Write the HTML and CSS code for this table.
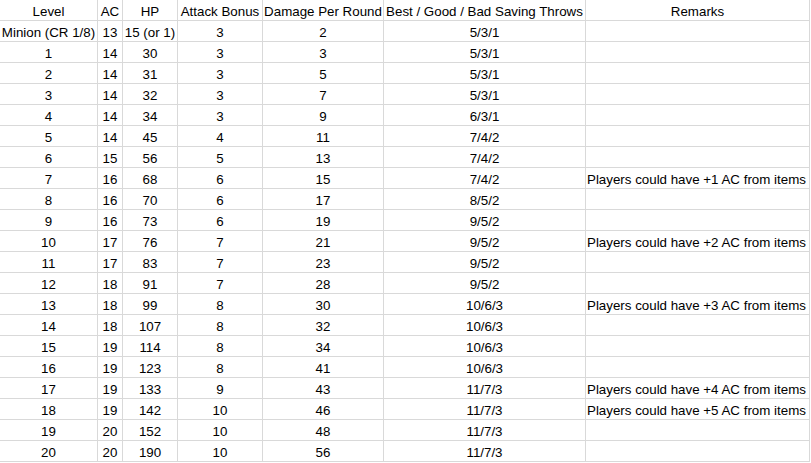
FILE: index.html
```html
<!DOCTYPE html>
<html lang="en">
<head>
<meta charset="utf-8">
<title>Monster stats by level</title>
<link rel="stylesheet" href="styles.css">
</head>
<body>
<div class="sheet">
  <div class="c">Level</div><div class="c">AC</div><div class="c">HP</div><div class="c">Attack Bonus</div><div class="c">Damage Per Round</div><div class="c">Best / Good / Bad Saving Throws</div><div class="c">Remarks</div>
  <div class="c">Minion (CR 1/8)</div><div class="c">13</div><div class="c">15 (or 1)</div><div class="c">3</div><div class="c">2</div><div class="c">5/3/1</div><div class="l"></div>
  <div class="c">1</div><div class="c">14</div><div class="c">30</div><div class="c">3</div><div class="c">3</div><div class="c">5/3/1</div><div class="l"></div>
  <div class="c">2</div><div class="c">14</div><div class="c">31</div><div class="c">3</div><div class="c">5</div><div class="c">5/3/1</div><div class="l"></div>
  <div class="c">3</div><div class="c">14</div><div class="c">32</div><div class="c">3</div><div class="c">7</div><div class="c">5/3/1</div><div class="l"></div>
  <div class="c">4</div><div class="c">14</div><div class="c">34</div><div class="c">3</div><div class="c">9</div><div class="c">6/3/1</div><div class="l"></div>
  <div class="c">5</div><div class="c">14</div><div class="c">45</div><div class="c">4</div><div class="c">11</div><div class="c">7/4/2</div><div class="l"></div>
  <div class="c">6</div><div class="c">15</div><div class="c">56</div><div class="c">5</div><div class="c">13</div><div class="c">7/4/2</div><div class="l"></div>
  <div class="c">7</div><div class="c">16</div><div class="c">68</div><div class="c">6</div><div class="c">15</div><div class="c">7/4/2</div><div class="l">Players could have +1 AC from items</div>
  <div class="c">8</div><div class="c">16</div><div class="c">70</div><div class="c">6</div><div class="c">17</div><div class="c">8/5/2</div><div class="l"></div>
  <div class="c">9</div><div class="c">16</div><div class="c">73</div><div class="c">6</div><div class="c">19</div><div class="c">9/5/2</div><div class="l"></div>
  <div class="c">10</div><div class="c">17</div><div class="c">76</div><div class="c">7</div><div class="c">21</div><div class="c">9/5/2</div><div class="l">Players could have +2 AC from items</div>
  <div class="c">11</div><div class="c">17</div><div class="c">83</div><div class="c">7</div><div class="c">23</div><div class="c">9/5/2</div><div class="l"></div>
  <div class="c">12</div><div class="c">18</div><div class="c">91</div><div class="c">7</div><div class="c">28</div><div class="c">9/5/2</div><div class="l"></div>
  <div class="c">13</div><div class="c">18</div><div class="c">99</div><div class="c">8</div><div class="c">30</div><div class="c">10/6/3</div><div class="l">Players could have +3 AC from items</div>
  <div class="c">14</div><div class="c">18</div><div class="c">107</div><div class="c">8</div><div class="c">32</div><div class="c">10/6/3</div><div class="l"></div>
  <div class="c">15</div><div class="c">19</div><div class="c">114</div><div class="c">8</div><div class="c">34</div><div class="c">10/6/3</div><div class="l"></div>
  <div class="c">16</div><div class="c">19</div><div class="c">123</div><div class="c">8</div><div class="c">41</div><div class="c">10/6/3</div><div class="l"></div>
  <div class="c">17</div><div class="c">19</div><div class="c">133</div><div class="c">9</div><div class="c">43</div><div class="c">11/7/3</div><div class="l">Players could have +4 AC from items</div>
  <div class="c">18</div><div class="c">19</div><div class="c">142</div><div class="c">10</div><div class="c">46</div><div class="c">11/7/3</div><div class="l">Players could have +5 AC from items</div>
  <div class="c">19</div><div class="c">20</div><div class="c">152</div><div class="c">10</div><div class="c">48</div><div class="c">11/7/3</div><div class="l"></div>
  <div class="c">20</div><div class="c">20</div><div class="c">190</div><div class="c">10</div><div class="c">56</div><div class="c">11/7/3</div><div class="l"></div>
</div>
</body>
</html>
```
FILE: styles.css
```css
html, body {
  margin: 0;
  padding: 0;
  background: #ffffff;
}

.sheet {
  display: grid;
  grid-template-columns: 98px 25px 55px 85px 121px 202px 224px;
  grid-auto-rows: 21px;
  font-family: "Liberation Sans", Arial, sans-serif;
  font-size: 13.33px;
  color: #000000;
}

.c, .l {
  box-sizing: border-box;
  border-right: 1px solid #d9d9d9;
  border-bottom: 1px solid #d9d9d9;
  padding: 2px 1px 0;
  line-height: 20px;
  white-space: nowrap;
  overflow: hidden;
}

.c {
  text-align: center;
}

.l {
  text-align: left;
  padding-left: 1px;
}
```
